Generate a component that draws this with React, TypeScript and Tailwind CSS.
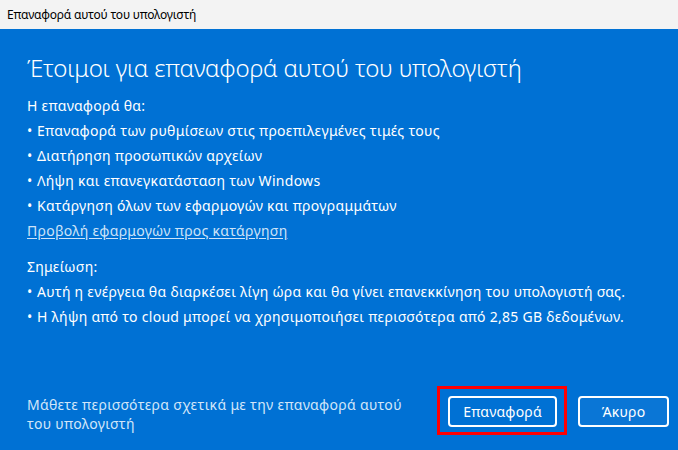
import React from "react";

const font = { fontFamily: '"Noto Sans", "Open Sans", sans-serif' };

function Bullet({ children }: { children: React.ReactNode }) {
  return (
    <div className="flex h-[25px] items-center">
      <span className="w-[10px]">•</span>
      <span>{children}</span>
    </div>
  );
}

export default function App() {
  return (
    <div className="flex h-[450px] w-[678px] flex-col overflow-hidden bg-[#0071d4] text-white" style={font}>
      <div className="flex h-[29px] items-center bg-[#f3f3f3] pl-[7px] text-[12px] tracking-[-0.2px] text-black">
        Επαναφορά αυτού του υπολογιστή
      </div>
      <div className="flex flex-1 flex-col px-[27px]">
        <h1 className="mt-[20px] h-[38px] text-[24px] font-light leading-[38px] tracking-[-0.2px]">
          Έτοιμοι για επαναφορά αυτού του υπολογιστή
        </h1>
        <div className="mt-[6px] text-[14px] tracking-[0.28px]">
          <div className="flex h-[25px] items-center">Η επαναφορά θα:</div>
          <Bullet>Επαναφορά των ρυθμίσεων στις προεπιλεγμένες τιμές τους</Bullet>
          <Bullet>Διατήρηση προσωπικών αρχείων</Bullet>
          <Bullet>Λήψη και επανεγκατάσταση των Windows</Bullet>
          <Bullet>Κατάργηση όλων των εφαρμογών και προγραμμάτων</Bullet>
          <div className="flex h-[25px] items-center">
            <a className="text-[#cde3f8] underline underline-offset-2">Προβολή εφαρμογών προς κατάργηση</a>
          </div>
          <div className="mt-[11px] flex h-[25px] items-center">Σημείωση:</div>
          <Bullet>Αυτή η ενέργεια θα διαρκέσει λίγη ώρα και θα γίνει επανεκκίνηση του υπολογιστή σας.</Bullet>
          <Bullet>Η λήψη από το cloud μπορεί να χρησιμοποιήσει περισσότερα από 2,85 GB δεδομένων.</Bullet>
        </div>
        <div className="mt-auto mb-[15px] mr-[-18px] flex items-end justify-between">
          <div className="mb-[2px] w-[400px] text-[14px] leading-[19px] tracking-[0.32px] text-[#d2e6f9]">
            Μάθετε περισσότερα σχετικά με την επαναφορά αυτού
            <br />
            του υπολογιστή
          </div>
          <div className="flex items-end gap-[11px]">
            <div className="border-[3px] border-[#ff0000] pt-[7px] pb-[5px] pl-[8px] pr-[7px]">
              <button className="block h-[31px] w-[109px] rounded-[4px] border-2 border-white text-[14px] tracking-[0.2px] text-white">
                Επαναφορά
              </button>
            </div>
            <button className="mb-[8px] block h-[31px] w-[91px] rounded-[4px] border-2 border-white bg-[#0a76d6] text-[14px] tracking-[0.2px] text-white">
              Άκυρο
            </button>
          </div>
        </div>
      </div>
    </div>
  );
}
